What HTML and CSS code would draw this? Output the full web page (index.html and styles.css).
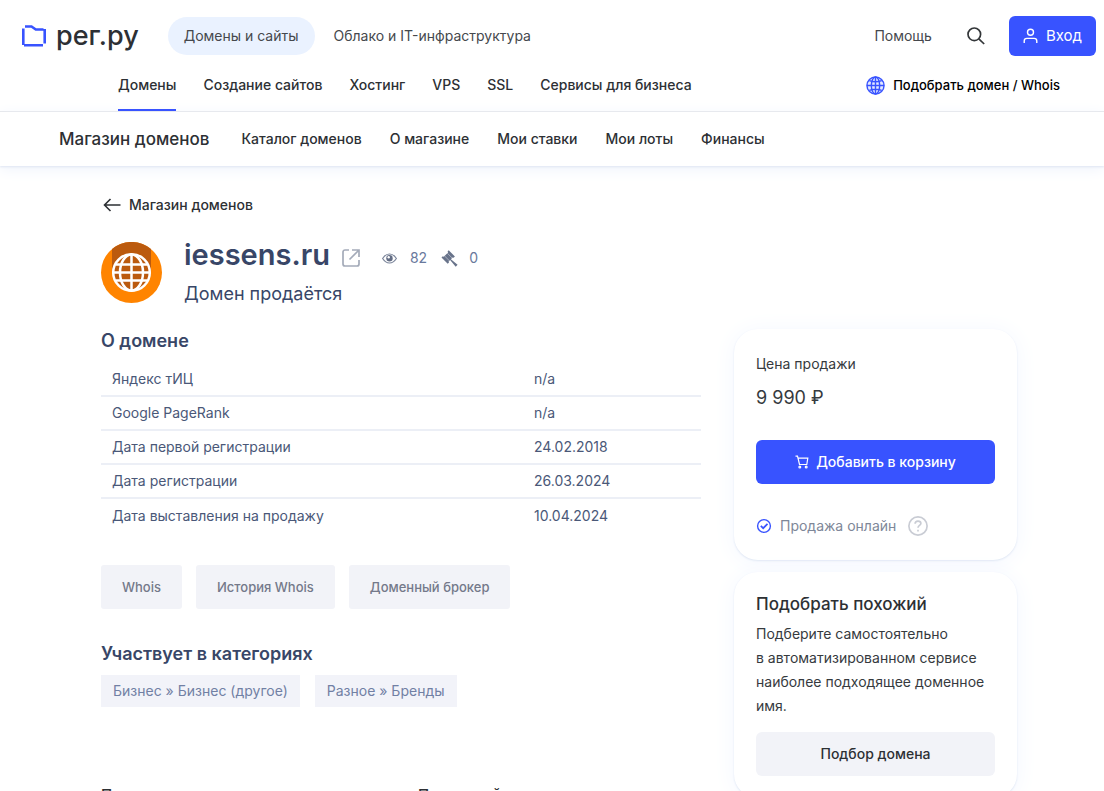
FILE: index.html
```html
<!DOCTYPE html>
<html lang="ru">
<head>
<meta charset="utf-8">
<meta name="viewport" content="width=device-width, initial-scale=1">
<title>iessens.ru — Магазин доменов</title>
<link rel="stylesheet" href="styles.css">
</head>
<body>
<header class="header">
  <div class="topbar">
    <a class="logo" href="#">
      <svg class="logo-mark" viewBox="0 0 26 22" fill="none" stroke="#3853ff" stroke-width="2.600"><path d="M4 1.500h6.500l4.300 3H22.500M23.700 4v14.500M22 20.300H3M2.300 20V3.500"/></svg>
      <span class="logo-text">рег.ру</span>
    </a>
    <nav class="sections">
      <a class="section section-active" href="#">Домены и сайты</a>
      <a class="section" href="#">Облако и IT-инфраструктура</a>
    </nav>
    <a class="help" href="#">Помощь</a>
    <button class="search" type="button" aria-label="Поиск">
      <svg viewBox="0 0 18 18" fill="none" stroke="#333639" stroke-width="1.700"><circle cx="7.300" cy="7.300" r="6.300"/><path d="M11.800 11.800l5.400 5.200"/></svg>
    </button>
    <button class="login" type="button">
      <svg viewBox="0 0 16 16" fill="none" stroke="currentColor" stroke-width="1.500"><circle cx="8" cy="4" r="3.200"/><path d="M1.300 15.500v-2.200c0-1.600 1.200-2.800 2.800-2.800h7.800c1.600 0 2.800 1.200 2.800 2.800v2.200"/></svg>
      Вход
    </button>
  </div>
  <div class="menubar">
    <nav class="menu">
      <a class="menu-link menu-link-active" href="#">Домены</a>
      <a class="menu-link" href="#">Создание сайтов</a>
      <a class="menu-link" href="#">Хостинг</a>
      <a class="menu-link" href="#">VPS</a>
      <a class="menu-link" href="#">SSL</a>
      <a class="menu-link" href="#">Сервисы для бизнеса</a>
    </nav>
    <a class="whois" href="#">
      <svg viewBox="0 0 20 20" fill="#e4eaff" stroke="#3853ff" stroke-width="1.500"><circle cx="10" cy="10" r="9"/><ellipse cx="10" cy="10" rx="4.400" ry="9"/><path d="M10 1v18M1 10h18M3.500 4.800q6.500 2.400 13 0M3.500 15.200q6.500-2.400 13 0" fill="none"/></svg>
      Подобрать домен / Whois
    </a>
  </div>
</header>
<nav class="shopbar">
  <a class="shop-title" href="#">Магазин доменов</a>
  <a class="menu-link" href="#">Каталог доменов</a>
  <a class="menu-link" href="#">О магазине</a>
  <a class="menu-link" href="#">Мои ставки</a>
  <a class="menu-link" href="#">Мои лоты</a>
  <a class="menu-link" href="#">Финансы</a>
</nav>
<main class="page">
  <a class="back" href="#">
    <svg viewBox="0 0 18 14" fill="none" stroke="currentColor" stroke-width="1.600"><path d="M17.500 7H1.500M7.500 1l-6 6 6 6"/></svg>
    Магазин доменов
  </a>
  <div class="lot">
    <svg class="lot-logo" viewBox="0 0 61 61">
      <circle cx="30.500" cy="30.500" r="30.500" fill="#ff8400"/>
      <path d="M11 30.500V7a30.500 30.500 0 0 1 39 0v23.500z" fill="#bb5a0e"/>
      <circle cx="30.500" cy="30.500" r="18.300" fill="#bb5a0e"/>
      <g fill="none" stroke="#fff" stroke-width="2.500"><circle cx="30.500" cy="30.500" r="18.300"/><ellipse cx="30.500" cy="30.500" rx="11.500" ry="18"/><path d="M30.500 12v37M12 30.500h37M15 22.500h31M15 38.500h31"/></g>
    </svg>
    <div class="lot-info">
      <div class="lot-head">
        <h1 class="lot-name">iessens.ru</h1>
        <a class="external" href="#" aria-label="Открыть сайт">
          <svg viewBox="0 0 18 18" fill="none" stroke="#a4abb9" stroke-width="1.700"><path d="M7 1H3a2 2 0 0 0-2 2v12a2 2 0 0 0 2 2h12a2 2 0 0 0 2-2v-4M10 1h7v7M17 1L7.500 10.500"/></svg>
        </a>
        <span class="stat">
          <svg class="eye" viewBox="0 0 15 11"><path d="M.6 5.500Q3.500 1 7.500 1t6.900 4.500Q11.500 10 7.500 10T.6 5.500z" fill="none" stroke="#7c869b" stroke-width="1.200"/><circle cx="7.500" cy="5.200" r="3.200" fill="#636d84"/><circle cx="6.700" cy="4.300" r="1.200" fill="#fff"/></svg>
          82
        </span>
        <span class="stat stat-bids">
          <svg class="gavel" viewBox="0 0 17 17" fill="#68738a"><path d="M7.700.3l6.200 6.200-1.300 1.300-1-.4-1.700 1.800 6.700 5.600-1.900 1.900-5.600-6.700-1.500 1.500.4 1-1.300 1.300L.5 7.600l1.300-1.300 1 .4 4.300-4.200-.5-1z"/><path d="M3.600 6l4.900 4.900M6.300 3.200l4.900 4.900" stroke="#d5d9e1" stroke-width=".6"/></svg>
          0
        </span>
      </div>
      <p class="lot-status">Домен продаётся</p>
    </div>
  </div>
  <div class="columns">
    <div class="details">
      <h2 class="heading">О домене</h2>
      <table class="facts">
        <tr><th scope="row">Яндекс тИЦ</th><td>n/a</td></tr>
        <tr><th scope="row">Google PageRank</th><td>n/a</td></tr>
        <tr><th scope="row">Дата первой регистрации</th><td>24.02.2018</td></tr>
        <tr><th scope="row">Дата регистрации</th><td>26.03.2024</td></tr>
        <tr><th scope="row">Дата выставления на продажу</th><td>10.04.2024</td></tr>
      </table>
      <div class="actions">
        <button class="action" type="button">Whois</button>
        <button class="action" type="button">История Whois</button>
        <button class="action" type="button">Доменный брокер</button>
      </div>
      <h2 class="heading">Участвует в категориях</h2>
      <div class="tags">
        <a class="tag" href="#">Бизнес » Бизнес (другое)</a>
        <a class="tag" href="#">Разное » Бренды</a>
      </div>
      <div class="owners">
        <span>Продавец</span>
        <span>Последний</span>
      </div>
    </div>
    <aside class="sidebar">
      <section class="card">
        <p class="price-label">Цена продажи</p>
        <p class="price">9 990 ₽</p>
        <button class="buy" type="button">
          <svg viewBox="0 0 14 14" fill="none" stroke="currentColor" stroke-width="1.200"><path d="M.5 1.200h2l2 8.300h7.300l1-6.300H3"/><circle cx="4.800" cy="12" r=".9"/><circle cx="11.200" cy="12" r=".9"/></svg>
          Добавить в корзину
        </button>
        <div class="online">
          <svg class="check" viewBox="0 0 16 16" fill="none" stroke="#3853ff" stroke-width="1.400"><circle cx="8" cy="8" r="6.400"/><path d="M4.800 7.800l2.400 2.400 4.300-4.300" stroke-width="1.700"/></svg>
          <span>Продажа онлайн</span>
          <button class="hint" type="button" aria-label="Подсказка"><svg viewBox="0 0 18 18" fill="none" stroke="#c9ccd4" stroke-width="1.500"><circle cx="9" cy="9" r="8.200"/><path d="M6.400 7c0-1.500 1.100-2.400 2.600-2.400s2.600.9 2.600 2.200c0 1.700-2.600 1.700-2.600 3.700M9 12.400v1.600"/></svg></button>
        </div>
      </section>
      <section class="card card-similar">
        <h3 class="card-title">Подобрать похожий</h3>
        <p class="card-text">Подберите самостоятельно в&nbsp;автоматизированном сервисе наиболее подходящее доменное имя.</p>
        <button class="pick" type="button">Подбор домена</button>
      </section>
    </aside>
  </div>
</main>
</body>
</html>
```

FILE: styles.css
```css
* { box-sizing: border-box; }
html { overflow: hidden; }
body { margin: 0; background: #fff; color: #2d3034; font: 14px/24px Inter, "Liberation Sans", sans-serif; }
a { color: inherit; text-decoration: none; }
button { border: 0; padding: 0; background: none; color: inherit; font: inherit; cursor: pointer; }
h1, h2, h3, p { margin: 0; }
svg { display: block; flex: none; }

.header { border-bottom: 1px solid #e5e6e8; }
.topbar { display: flex; align-items: center; height: 60px; padding: 12px 8px 0 21px; color: #45484d; }
.logo { display: flex; align-items: center; gap: 9px; color: #2d3034; }
.logo-mark { width: 26px; height: 22px; }
.logo-text { font-size: 27px; line-height: 32px; font-weight: 500; }
.sections { display: flex; flex: 1; gap: 3px; margin-left: 29px; }
.section { padding: 7px 16px; border-radius: 19px; white-space: nowrap; }
.section-active { background: #eaf2ff; }
.search { margin: 0 24px 0 35px; }
.search svg { width: 18px; height: 18px; }
.login { display: flex; align-items: center; gap: 8px; height: 40px; padding: 0 14px; border-radius: 6px; background: #3853ff; color: #fff; font-size: 15px; }
.login svg { width: 15px; height: 16px; }

.menubar { display: flex; justify-content: space-between; align-items: flex-start; height: 51px; padding: 0 44px 0 118px; }
.menu { display: flex; gap: 27px; height: 100%; }
.menu-link { font-weight: 500; white-space: nowrap; }
.menu .menu-link { padding-top: 13px; }
.menu .menu-link-active { border-bottom: 2px solid #3853ff; }
.whois { display: flex; align-items: center; gap: 8px; padding-top: 13px; color: #000; font-size: 13px; font-weight: 500; white-space: nowrap; }
.whois svg { width: 19px; height: 19px; }

.shopbar { display: flex; align-items: center; gap: 28px; height: 54px; padding-left: 59px; box-shadow: 0 1px 2px #dfe5f2, 0 3px 14px #eef3fc; }
.shop-title { margin-right: 4px; font-size: 17px; font-weight: 500; white-space: nowrap; }

.page { padding: 27px 87px 0 101px; color: #384667; }
.back { display: inline-flex; align-items: center; gap: 8px; padding-left: 2px; color: #2d3034; font-weight: 500; }
.back svg { width: 18px; height: 14px; }
.lot { display: flex; gap: 22px; margin-top: 18px; }
.lot-logo { width: 61px; height: 61px; margin-top: 5px; }
.lot-head { display: flex; align-items: center; height: 36px; }
.lot-name { font-size: 29px; line-height: 36px; font-weight: 600; }
.external { margin: 6px 22px 0 12px; }
.external svg { width: 18px; height: 18px; }
.stat { display: flex; align-items: center; gap: 13px; margin-top: 6px; color: #69799c; }
.stat-bids { gap: 11px; margin-left: 14px; }
.eye { width: 15px; height: 11px; }
.gavel { width: 17px; height: 17px; }
.lot-status { margin-top: 7px; font-size: 18px; line-height: 28px; }

.columns { display: flex; justify-content: space-between; gap: 33px; margin-top: 21px; }
.details { flex: 1; max-width: 600px; }
.heading { font-size: 18px; line-height: 24px; font-weight: 600; }
.facts { width: 100%; margin-top: 9px; border-collapse: collapse; table-layout: fixed; color: #4a5878; font-size: 14px; }
.facts th, .facts td { height: 34px; padding: 0 11px; text-align: left; font-weight: 400; }
.facts th { width: 422px; }
.facts tr + tr { border-top: 2px solid #eceff6; }
.actions { display: flex; gap: 14px; margin: 33px 0; }
.action { height: 44px; padding: 0 21px; border-radius: 3px; background: #f2f3f8; color: #74798a; font-size: 13px; font-weight: 500; }
.tags { display: flex; gap: 15px; margin-top: 9px; }
.tag { padding: 4px 12px; background: #f2f3f9; color: #7180a4; }
.owners { display: grid; grid-template-columns: 317px 1fr; margin-top: 76px; color: #2d3034; font-size: 15px; font-weight: 500; }

.sidebar { display: flex; flex-direction: column; gap: 12px; flex: 0 0 283px; color: #363a3e; }
.card { padding: 23px 22px 22px; border-radius: 24px; background: #fff; box-shadow: 0 1px 2px #dfe6f4, 0 2px 24px #f3f7fe; }
.card-similar { padding-top: 20px; }
.price { margin-top: 8px; font-size: 18px; line-height: 28px; }
.buy { display: flex; align-items: center; justify-content: center; gap: 7px; width: 100%; height: 44px; margin: 28px 0 30px; border-radius: 6px; background: #3853ff; color: #fff; font-weight: 500; }
.buy svg { width: 14px; height: 14px; }
.online { display: flex; align-items: center; gap: 8px; color: #7e8798; }
.check { width: 16px; height: 16px; }
.hint { margin-left: 4px; }
.hint svg { width: 20px; height: 20px; }
.card-title { color: #2d3034; font-size: 17px; line-height: 24px; font-weight: 500; }
.card-text { margin: 6px 0 14px; }
.pick { width: 100%; height: 44px; border-radius: 6px; background: #f2f3f8; color: #2d3034; font-weight: 500; }
```
